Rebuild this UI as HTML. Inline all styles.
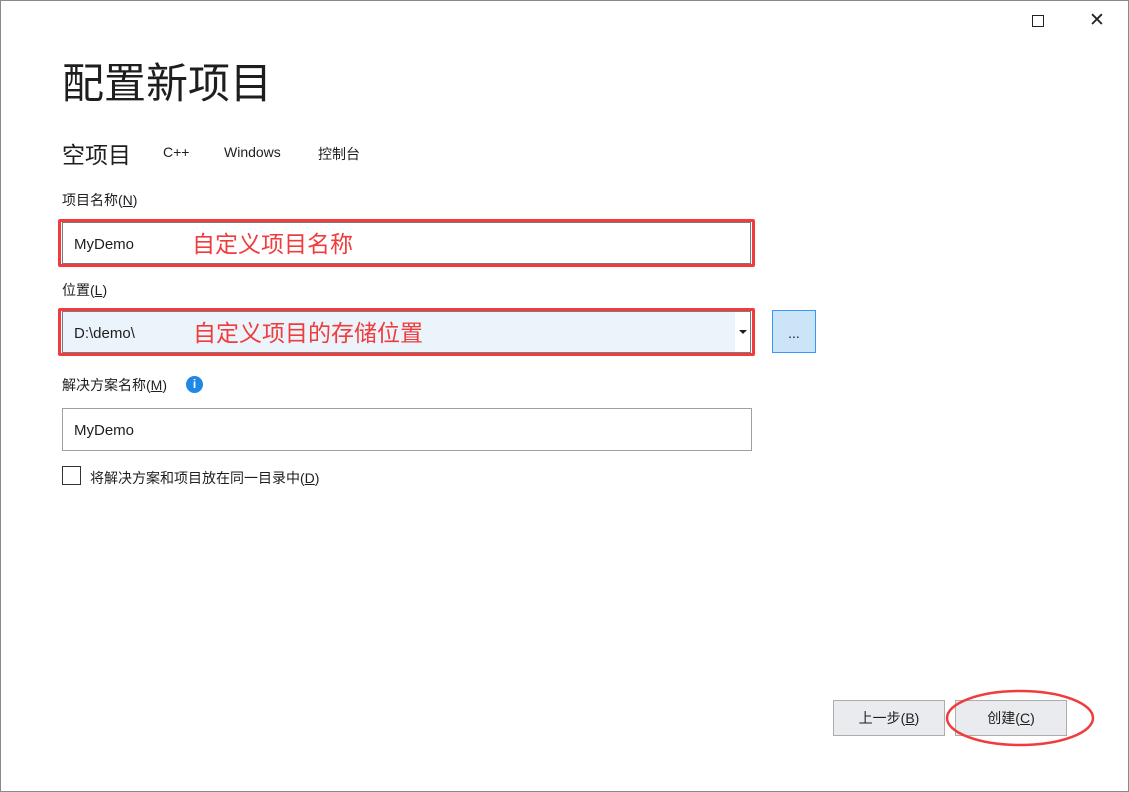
<!DOCTYPE html>
<html><head><meta charset="utf-8"><style>
*{margin:0;padding:0;box-sizing:border-box}
body{width:1129px;height:792px;background:#fff;position:relative;overflow:hidden;font-family:"Liberation Sans","Noto Sans CJK SC",sans-serif;color:#1e1e1e}
.a{position:absolute;white-space:nowrap}
.win{position:absolute;left:0;top:0;width:1129px;height:792px;border:1px solid #8a8a8a}
.red{position:absolute;border:3px solid #f03c3c;border-radius:2px}
.inp{position:absolute;border:1px solid #7a7a7a;background:#fff;font-size:15px;padding-left:11px}
.ann{color:#f03c3c;font-size:23px}
.btn{position:absolute;border:1px solid #adadad;background:#e9ebee;font-size:14px;text-align:center;line-height:34px}
</style></head><body>
<div class="win"></div>
<div class="a" style="left:1032px;top:15px;width:12px;height:12px;border:1.5px solid #222"></div>
<div class="a" style="left:1089px;top:9px;font-size:19px;color:#222">✕</div>
<div class="a" style="left:62px;top:50px;font-size:42px;color:#1e1e1e">配置新项目</div>
<div class="a" style="left:62px;top:136px;font-size:23px">空项目</div>
<div class="a" style="left:163px;top:144px;font-size:14px">C++</div>
<div class="a" style="left:224px;top:144px;font-size:14px">Windows</div>
<div class="a" style="left:318px;top:144px;font-size:14px">控制台</div>
<div class="a" style="left:62px;top:190px;font-size:14px">项目名称(<u>N</u>)</div>
<div class="red" style="left:58px;top:219px;width:697px;height:48px"></div>
<div class="inp" style="left:62px;top:222px;width:689px;height:42px;line-height:43px">MyDemo</div>
<div class="a ann" style="left:192px;top:225px">自定义项目名称</div>
<div class="a" style="left:62px;top:280px;font-size:14px">位置(<u>L</u>)</div>
<div class="red" style="left:58px;top:308px;width:697px;height:48px"></div>
<div class="inp" style="left:62px;top:311px;width:689px;height:42px;line-height:43px;background:#ebf3fb">D:\demo\</div>
<div class="a" style="left:735px;top:312px;width:15px;height:40px;background:#fff"></div>
<div class="a" style="left:739px;top:330px;width:0;height:0;border-left:4px solid transparent;border-right:4px solid transparent;border-top:4px solid #1e1e1e"></div>
<div class="a ann" style="left:193px;top:314px">自定义项目的存储位置</div>
<div class="a" style="left:772px;top:310px;width:44px;height:43px;background:#cce4f7;border:1px solid #3399ff;text-align:center;font-size:14px;line-height:44px">...</div>
<div class="a" style="left:62px;top:375px;font-size:14px">解决方案名称(<u>M</u>)</div>
<div class="a" style="left:186px;top:376px;width:17px;height:17px;border-radius:50%;background:#1e88e5;color:#fff;font-size:12px;font-weight:bold;text-align:center;line-height:17px">i</div>
<div class="inp" style="left:62px;top:408px;width:690px;height:43px;line-height:43px;border-color:#a0a0a0">MyDemo</div>
<div class="a" style="left:62px;top:466px;width:19px;height:19px;border:1px solid #333;background:#fff"></div>
<div class="a" style="left:90px;top:468px;font-size:14px">将解决方案和项目放在同一目录中(<u>D</u>)</div>
<div class="btn" style="left:833px;top:700px;width:112px;height:36px">上一步(<u>B</u>)</div>
<div class="btn" style="left:955px;top:700px;width:112px;height:36px">创建(<u>C</u>)</div>
<svg class="a" style="left:0;top:0" width="1129" height="792"><ellipse cx="1020" cy="718" rx="73" ry="27" fill="none" stroke="#f03c3c" stroke-width="2.5"/></svg>
</body></html>
